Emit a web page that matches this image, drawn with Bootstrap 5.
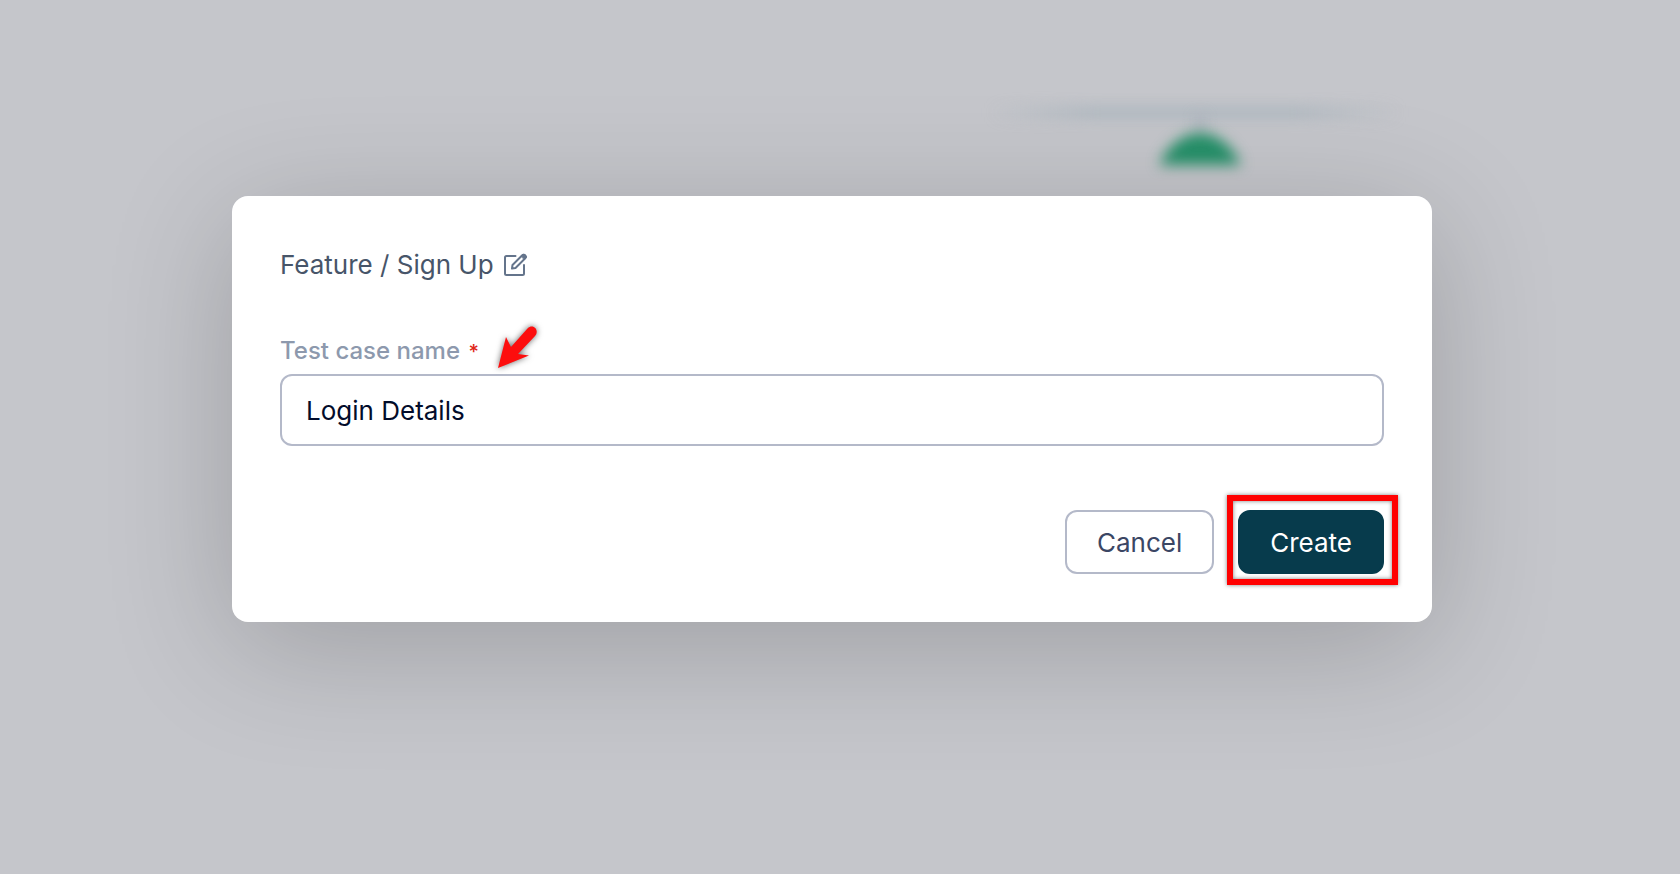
<!DOCTYPE html>
<html lang="en">
<head>
<meta charset="utf-8">
<meta name="viewport" content="width=device-width, initial-scale=1">
<title>Create test case</title>
<link href="https://cdn.jsdelivr.net/npm/bootstrap@5.3.0/dist/css/bootstrap.min.css" rel="stylesheet">
<style>
  body { background: #c5c6cb; font-family: Inter, "Liberation Sans", sans-serif; font-size: 26px; color: #475569; }
  .stage { padding: 0 16px 56px 0; }
  .flow-node { left: 50%; top: 80px; margin-left: 110px; }
  .dialog-box { width: 1200px; max-width: 100%; border-radius: 16px; box-shadow: 0 24px 128px rgba(0, 0, 0, .2); }
  .crumb { font-size: 26px; line-height: 42px; font-weight: 400; margin-bottom: 48px; gap: 10px; color: #475569; }
  .field-label { font-size: 24px; line-height: 34px; font-weight: 500; color: #8d99ad; margin-bottom: 6px; }
  .req { color: #e0281a; font-size: 20px; line-height: 1; margin-left: 2px; }
  .form-control.name-field { height: 72px; border: 2px solid #b4b9c9; border-radius: 12px; padding: 0 24px; font-size: 26px; color: #020c2b; }
  .actions { gap: 24px; margin-top: 64px; }
  .act { height: 64px; font-size: 26px; line-height: 40px; border-radius: 12px; padding: 11px 30px 9px; border-width: 2px; }
  .act-cancel { border-color: #b4b9c9; color: #3b4664; background: #fff; }
  .act-create { border-color: #073b4c; color: #fff; background: #073b4c; }
  .marker { inset: -15px -14px -11px -11px; border: 6px solid #f00; pointer-events: none; filter: drop-shadow(0 0 2px rgba(0, 0, 0, .5)); }
  .pointer { left: 208px; top: -16px; }
</style>
</head>
<body>
<svg class="flow-node position-absolute" width="500" height="110" viewBox="0 0 500 110" aria-hidden="true">
  <defs>
    <filter id="soft" x="-60" y="-60" width="620" height="230" filterUnits="userSpaceOnUse" color-interpolation-filters="sRGB"><feGaussianBlur stdDeviation="7"/></filter>
    <linearGradient id="fade"><stop offset="0" stop-color="#adb7bf" stop-opacity="0"/><stop offset=".25" stop-color="#adb7bf"/><stop offset=".75" stop-color="#adb7bf"/><stop offset="1" stop-color="#adb7bf" stop-opacity="0"/></linearGradient>
  </defs>
  <rect x="40" y="27" width="410" height="11" fill="url(#fade)" filter="url(#soft)"/>
  <rect x="246" y="36" width="8" height="16" fill="#a9afbb" filter="url(#soft)"/>
  <path d="M209 85Q224 54 250 53Q276 54 291 85Z" fill="#259069" filter="url(#soft)"/>
</svg>
<main class="stage position-relative min-vh-100 d-flex align-items-center justify-content-center">
  <form class="dialog-box bg-white p-5" role="dialog" aria-label="Create test case">
    <h1 class="crumb d-flex align-items-center">
      Feature / Sign Up
      <svg width="24" height="24" viewBox="0 0 24 24" fill="none" stroke="#64748b" stroke-width="2" stroke-linejoin="round" stroke-linecap="round" role="img" aria-label="Edit">
        <path d="M11.500 3H2.500Q1 3 1 4.500V20.500Q1 22 2.500 22H18.500Q20 22 20 20.500V12"/>
        <path d="M8.500 12L18 2.500Q19.500 1 21 2.500Q22.500 4 21 5.500L11.500 15L8 15.500Z"/>
        <path d="M17.500 3L19 1.500Q20 .8 21.200 1.800L22 2.600Q23 4 22 5L20.500 6.500Z" fill="#64748b" stroke-width="1"/>
      </svg>
    </h1>
    <div class="position-relative">
      <label class="field-label d-block" for="caseName">Test case name <span class="req">*</span></label>
      <input class="form-control name-field" id="caseName" type="text" value="Login Details" required>
      <svg class="pointer position-absolute" width="60" height="60" viewBox="0 0 60 60" aria-hidden="true">
        <path d="M10 50L18 19L23 29L39.500 10.500C45 5 52 12 47 18L30 36L41 37.500Z" fill="#fd0d0d" style="filter:drop-shadow(0 0 3px rgba(0,0,0,.6))"/>
      </svg>
    </div>
    <div class="actions d-flex justify-content-end">
      <button type="button" class="btn act act-cancel">Cancel</button>
      <div class="position-relative">
        <button type="submit" class="btn act act-create">Create</button>
        <div class="marker position-absolute"></div>
      </div>
    </div>
  </form>
</main>
<script src="https://cdn.jsdelivr.net/npm/bootstrap@5.3.0/dist/js/bootstrap.bundle.min.js"></script>
</body>
</html>
